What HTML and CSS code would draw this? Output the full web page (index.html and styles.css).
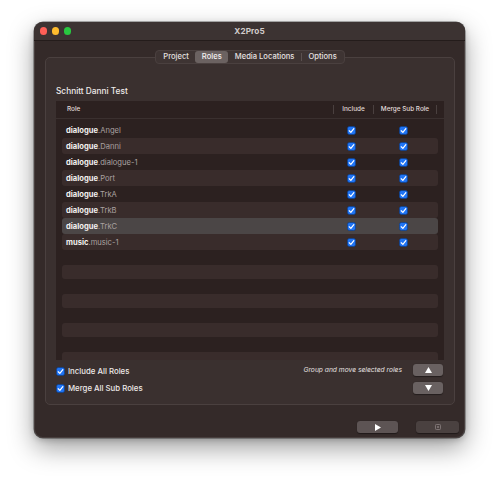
FILE: index.html
```html
<!DOCTYPE html>
<html>
<head>
<meta charset="utf-8">
<link rel="stylesheet" href="styles.css">
</head>
<body>
<svg width="0" height="0" class="defs">
  <symbol id="cb" viewBox="0 0 10 10">
    <rect x="0.5" y="0.5" width="9" height="9" rx="2.2" fill="#1f74f5" stroke="#0c3f8a" stroke-width="0.8"/>
    <path d="M2.5 5.3 L4.3 7.1 L7.6 2.9" fill="none" stroke="#fff" stroke-width="1.3" stroke-linecap="round" stroke-linejoin="round"/>
  </symbol>
</svg>
<div class="window">
  <div class="titlebar">
    <div class="lights"><span class="light red"></span><span class="light yellow"></span><span class="light green"></span></div>
    <div class="title">X2Pro5</div>
    <div></div>
  </div>
  <div class="main">
    <div class="tabs">
      <span class="tab">Project</span><span class="tab active">Roles</span><span class="tab">Media Locations</span><span class="tsep"></span><span class="tab">Options</span>
    </div>
    <div class="box">
      <div class="doc-title">Schnitt Danni Test</div>
      <div class="table">
        <div class="thead">
          <div class="hcell role">Role</div>
          <div class="hcell col">Include</div>
          <div class="hcell col last">Merge Sub Role</div>
        </div>
        <div class="tbody">
          <div class="row"><div class="name"><b>dialogue</b>.Angel</div><div class="c"><svg class="cb"><use href="#cb"/></svg></div><div class="c"><svg class="cb"><use href="#cb"/></svg></div></div>
          <div class="row alt"><div class="name"><b>dialogue</b>.Danni</div><div class="c"><svg class="cb"><use href="#cb"/></svg></div><div class="c"><svg class="cb"><use href="#cb"/></svg></div></div>
          <div class="row"><div class="name"><b>dialogue</b>.dialogue-1</div><div class="c"><svg class="cb"><use href="#cb"/></svg></div><div class="c"><svg class="cb"><use href="#cb"/></svg></div></div>
          <div class="row alt"><div class="name"><b>dialogue</b>.Port</div><div class="c"><svg class="cb"><use href="#cb"/></svg></div><div class="c"><svg class="cb"><use href="#cb"/></svg></div></div>
          <div class="row"><div class="name"><b>dialogue</b>.TrkA</div><div class="c"><svg class="cb"><use href="#cb"/></svg></div><div class="c"><svg class="cb"><use href="#cb"/></svg></div></div>
          <div class="row alt"><div class="name"><b>dialogue</b>.TrkB</div><div class="c"><svg class="cb"><use href="#cb"/></svg></div><div class="c"><svg class="cb"><use href="#cb"/></svg></div></div>
          <div class="row sel"><div class="name"><b>dialogue</b>.TrkC</div><div class="c"><svg class="cb"><use href="#cb"/></svg></div><div class="c"><svg class="cb"><use href="#cb"/></svg></div></div>
          <div class="row alt"><div class="name"><b>music</b>.music-1</div><div class="c"><svg class="cb"><use href="#cb"/></svg></div><div class="c"><svg class="cb"><use href="#cb"/></svg></div></div>
          <div class="erow"></div>
          <div class="erow alt"></div>
          <div class="erow"></div>
          <div class="erow alt"></div>
          <div class="erow"></div>
          <div class="erow alt"></div>
          <div class="erow"></div>
          <div class="erow alt"></div>
        </div>
      </div>
      <div class="controls">
        <div class="checks">
          <label class="check"><svg class="cb"><use href="#cb"/></svg><span>Include All Roles</span></label>
          <label class="check"><svg class="cb"><use href="#cb"/></svg><span>Merge All Sub Roles</span></label>
        </div>
        <div class="move">
          <span class="hint">Group and move selected roles</span>
          <div class="mbtns">
            <div class="mbtn"><svg width="7" height="6" viewBox="0 0 7 6"><path d="M3.5 0 L7 6 L0 6 Z" fill="#fff"/></svg></div>
            <div class="mbtn"><svg width="7" height="6" viewBox="0 0 7 6"><path d="M0 0 L7 0 L3.5 6 Z" fill="#fff"/></svg></div>
          </div>
        </div>
      </div>
    </div>
    <div class="footer">
      <div class="fbtn play"><svg width="6" height="7" viewBox="0 0 6 7"><path d="M0 0 L6 3.5 L0 7 Z" fill="#fff"/></svg></div>
      <div class="fbtn cancel"><svg width="6" height="6" viewBox="0 0 6 6"><rect x="0.5" y="0.5" width="5" height="5" rx="0.8" fill="none" stroke="#8a8080" stroke-width="0.8"/><path d="M2 2 L4 4 M4 2 L2 4" stroke="#8a8080" stroke-width="0.7"/></svg></div>
    </div>
  </div>
</div>
</body>
</html>
```

FILE: styles.css
```css
* { box-sizing: border-box; }
html, body { margin: 0; padding: 0; background: #ffffff; }
body {
  width: 500px;
  height: 486px;
  overflow: hidden;
  font-family: "Inter", "Noto Sans", sans-serif;
  padding: 22px 0 0 34px;
}
.defs { position: absolute; }

.window {
  width: 431px;
  height: 416px;
  background: #342a29;
  border-radius: 9px;
  box-shadow: 0 0 0 0.5px rgba(0,0,0,0.55), 0 10px 26px rgba(0,0,0,0.38), 0 2px 6px rgba(0,0,0,0.2), inset 0 0 0 1px rgba(255,255,255,0.10);
  overflow: hidden;
  display: flex;
  flex-direction: column;
}

.titlebar {
  height: 19px;
  background: #3c3332;
  border-bottom: 1px solid #241c1b;
  display: grid;
  grid-template-columns: 1fr auto 1fr;
  align-items: center;
}
.lights { display: flex; gap: 4.5px; padding-left: 5.5px; }
.light { width: 7.5px; height: 7.5px; border-radius: 50%; display: block; }
.red { background: #fe5f57; }
.yellow { background: #febc2e; }
.green { background: #28c840; }
.title {
  font-size: 8.2px;
  font-weight: 700;
  color: #d2cccb;
  letter-spacing: 0.1px;
}

.main { display: flex; flex-direction: column; }

.tabs {
  position: relative;
  z-index: 1;
  align-self: center;
  margin-top: 9px;
  height: 14px;
  display: flex;
  align-items: center;
  padding: 0 1px;
  background: #3e3433;
  border: 1px solid #4a403f;
  border-radius: 4px;
  margin-left: 1px;
}
.tab {
  font-size: 7.6px;
  font-weight: 500;
  color: #e6e1e0;
  padding: 0 6.5px;
  height: 12px;
  line-height: 12px;
  border-radius: 3px;
}
.tab.active { background: #6b6261; color: #f4f0f0; }
.tsep { width: 1px; height: 8px; background: #5a504f; }

.box {
  margin: -7px 10px 0 11px;
  height: 348px;
  background: #3a302f;
  border: 1px solid #4a403f;
  border-radius: 5px;
  padding: 27px 10px 0 10px;
}
.doc-title {
  font-size: 8.3px;
  font-weight: 500;
  line-height: 12px;
  color: #eeeae9;
  margin-bottom: 4px;
}

.table {
  height: 259px;
  background: #2c2120;
  overflow: hidden;
}
.thead {
  height: 18px;
  border-bottom: 1px solid #3a302f;
  display: grid;
  grid-template-columns: 271px 40px 64px 1fr;
  align-items: center;
  padding: 0 6px;
}
.hcell {
  font-size: 6.4px;
  font-weight: 500;
  color: #e0dad9;
  height: 9px;
  line-height: 9px;
}
.hcell.role { padding-left: 5px; }
.hcell.col { text-align: center; border-left: 1px solid #4a403f; }
.hcell.last { border-right: 1px solid #4a403f; }

.tbody { padding-top: 3px; }
.row {
  height: 16px;
  margin: 0 6px;
  border-radius: 3px;
  display: grid;
  grid-template-columns: 271px 40px 64px 1fr;
  align-items: center;
}
.row.alt, .erow.alt { background: #392c2b; }
.row.sel { background: #4b4646; }
.name {
  padding-left: 4px;
  font-size: 7.6px;
  color: #aaa1a0;
}
.name b { color: #f4f1f0; font-weight: 700; }
.c { display: flex; justify-content: center; padding-right: 3px; }
.cb { width: 9px; height: 9px; display: block; }

.erow { height: 15px; margin: 0 6px; border-radius: 3px; }
.erow.alt { height: 14px; }

.controls {
  display: flex;
  justify-content: space-between;
  margin-top: 4px;
}
.checks { display: flex; flex-direction: column; gap: 5px; padding-top: 1px; }
.check {
  display: flex;
  align-items: center;
  gap: 3px;
  height: 12px;
  font-size: 7.8px;
  font-weight: 500;
  color: #eeeae9;
}
.move { display: flex; align-items: flex-start; gap: 11px; padding-right: 1px; }
.hint {
  font-size: 6.7px;
  font-style: italic;
  color: #e6e1e0;
  line-height: 12px;
}
.mbtns { display: flex; flex-direction: column; gap: 6px; }
.mbtn {
  width: 30px;
  height: 12px;
  background: #696161;
  border-radius: 3px;
  display: flex;
  align-items: center;
  justify-content: center;
  box-shadow: 0 0.5px 1px rgba(0,0,0,0.4);
}

.footer {
  display: flex;
  justify-content: flex-end;
  gap: 18px;
  margin-top: 16px;
  padding-right: 6px;
}
.fbtn {
  height: 12px;
  border-radius: 3px;
  display: flex;
  align-items: center;
  justify-content: center;
  box-shadow: 0 0.5px 1px rgba(0,0,0,0.4);
}
.fbtn.play { width: 41px; background: #5d5454; }
.fbtn.cancel { width: 43px; background: #4a4140; }
```
